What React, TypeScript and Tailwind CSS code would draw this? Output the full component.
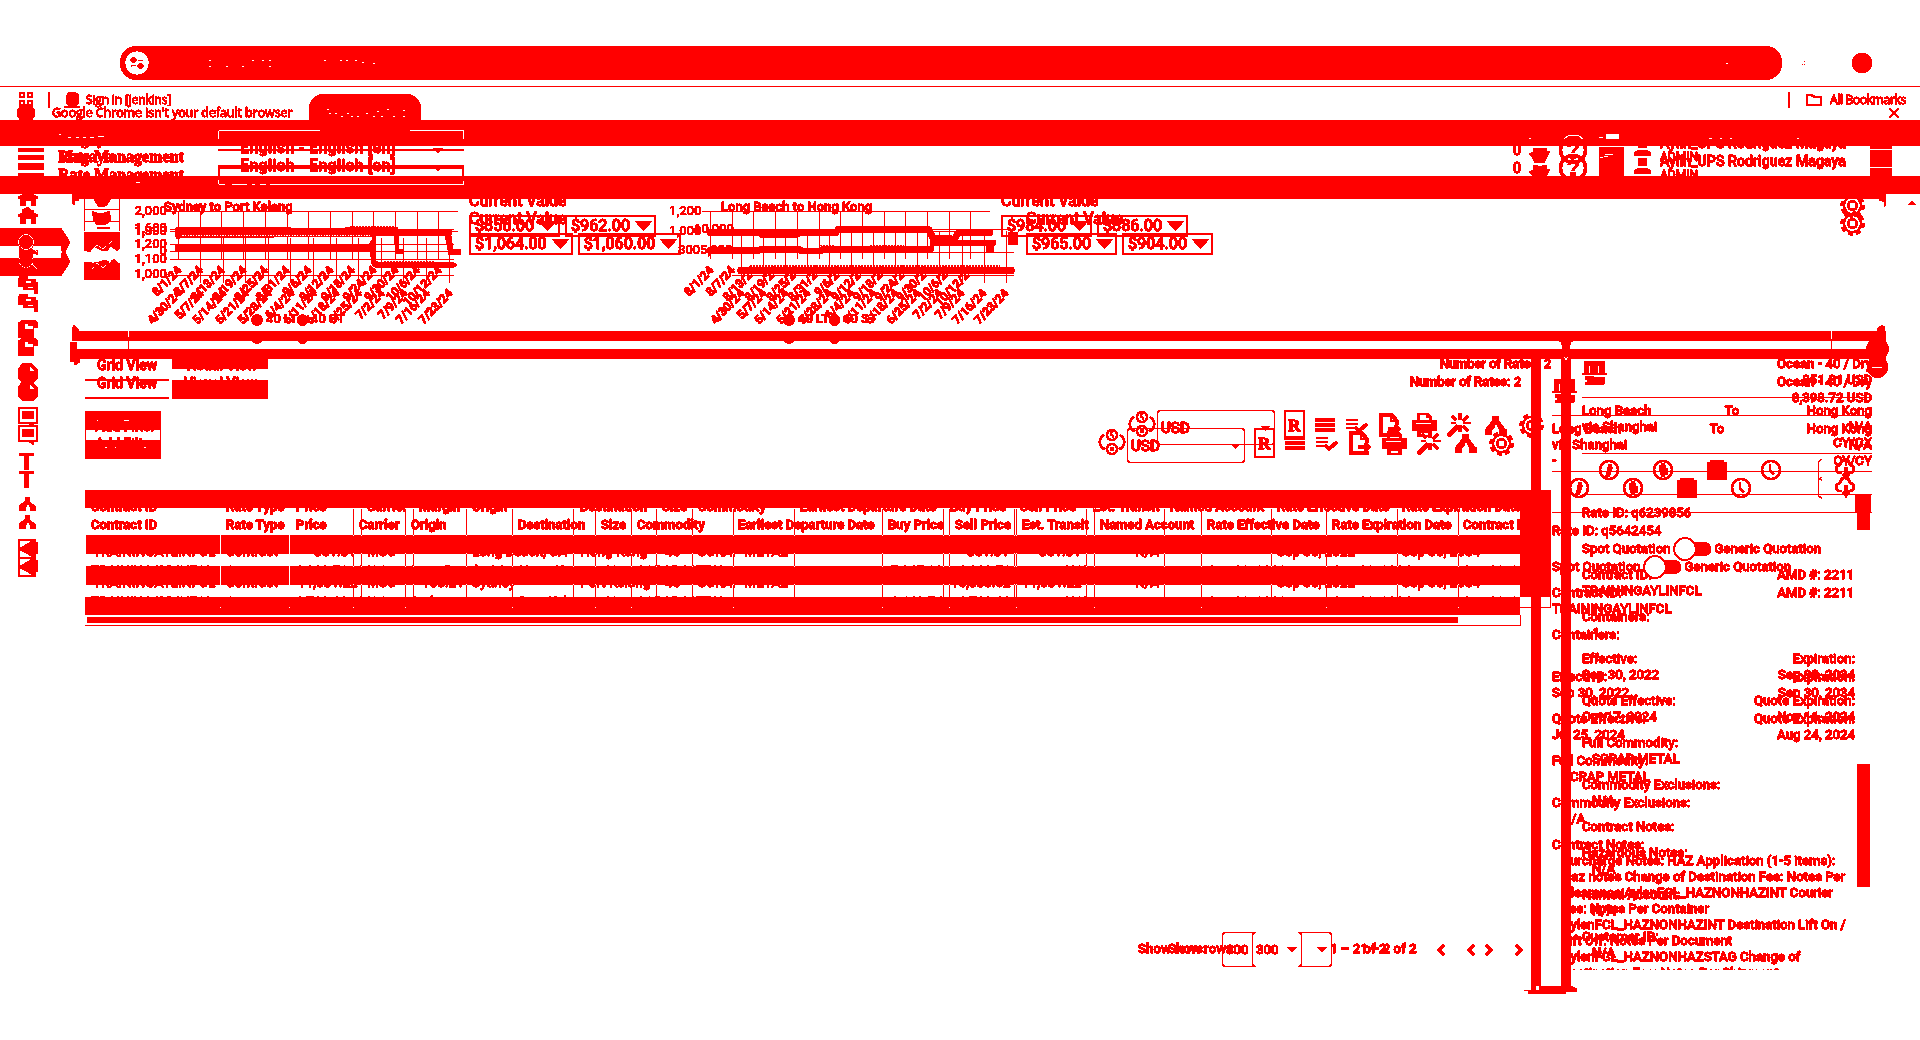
import React from 'react';

const RED = '#ff0000';

/* Every layer shares the single grid cell of the page. */
function Layer({ className = '', children }: { className?: string; children?: React.ReactNode }) {
  return <div className={`col-start-1 row-start-1 min-w-0 ${className}`}>{children}</div>;
}

/* Turns soft edges into hard ones, so that every pixel is either red or white. */
function HardEdges() {
  return (
    <svg className="absolute h-0 w-0">
      <filter id="hard" x="0" y="0" width="1" height="1" colorInterpolationFilters="sRGB">
        <feComponentTransfer>
          <feFuncG type="discrete" tableValues="0 0 0 0 0 0 0 0 0 0 1" />
          <feFuncB type="discrete" tableValues="0 0 0 0 0 0 0 0 0 0 1" />
        </feComponentTransfer>
      </filter>
    </svg>
  );
}

/* ---------- browser chrome ---------- */

function BrowserBar() {
  return (
    <Layer>
      <div className="flex h-[86px] items-start pl-[120px] pt-[46px]">
        <div className="flex h-[34px] w-[1662px] items-center rounded-full bg-[#f00] pl-[5px]">
          <div className="flex h-6 w-6 items-center justify-center rounded-full bg-white">
            <svg width="14" height="14" viewBox="0 0 14 14" fill={RED}>
              <circle cx="3.5" cy="4" r="2.700" />
              <rect x="8" y="4" width="5" height="1" />
              <circle cx="10.500" cy="10" r="2.700" />
              <rect x="1" y="9" width="5" height="1" />
              <rect x="1" y="9" width="1" height="2" />
            </svg>
          </div>
          <svg className="ml-[60px]" width="170" height="12" viewBox="209 58 170 12" fill="#fff" shapeRendering="crispEdges">
            {[[209, 61], [209, 67], [226, 67], [242, 67], [252, 61], [262, 61], [269, 61], [269, 67], [324, 61], [340, 61], [346, 61], [355, 61], [362, 63], [373, 64]].map(([x, y]) => (
              <rect key={`${x}-${y}`} x={x} y={y} width="2" height="1" />
            ))}
          </svg>
          <div className="ml-auto mr-[54px] h-px w-0.5 bg-white" />
        </div>
        <svg className="ml-[20px] mt-[14px]" width="4" height="6" fill={RED} shapeRendering="crispEdges">
          <rect x="2" y="1" width="1" height="1" />
          <rect x="0" y="4" width="1" height="1" />
          <rect x="2" y="4" width="1" height="1" />
        </svg>
        <div className="ml-[46px] mt-[7px] h-5 w-5 rounded-full bg-[#f00]" />
      </div>
      <div className="h-px bg-[#f00]" />
    </Layer>
  );
}

function BookmarksBar() {
  return (
    <Layer className="flex h-[108px] items-end pl-[19px] font-['Open_Sans'] text-[12px] font-medium leading-4">
      <svg className="mb-px" width="14" height="15" fill="none" stroke={RED} strokeWidth="2">
        <rect x="1" y="1" width="4" height="4" />
        <rect x="9" y="1" width="4" height="4" />
        <rect x="1" y="9" width="4" height="4" />
        <rect x="9" y="9" width="4" height="4" />
      </svg>
      <div className="ml-[15px] h-4 w-0.5 bg-[#f00]" />
      <svg className="ml-[14px]" width="16" height="16" fill={RED}>
        <path d="M4 1l2-1h5l3 2 1 3v6l-2 2v1h3v2H0v-2h4v-1l-2-2V5z" />
      </svg>
      <span className="ml-[6px] whitespace-nowrap tracking-[-0.15px]">Sign in [Jenkins]</span>
      <div className="ml-auto h-4 w-0.5 bg-[#f00]" />
      <svg className="ml-4 mb-[2px]" width="16" height="12" fill="none" stroke={RED} strokeWidth="2">
        <path d="M1 1h5l2 2h7v8H1z" />
      </svg>
      <span className="ml-2 mr-[14px] whitespace-nowrap tracking-[-0.3px]">All Bookmarks</span>
    </Layer>
  );
}

function InfoBar() {
  return (
    <Layer className="flex items-start pl-[17px] pt-[94px]">
      <div className="mt-[10px] h-[18px] w-[18px] rounded-full bg-[#f00]" />
      <span className="ml-[17px] mt-[11px] w-[257px] whitespace-nowrap font-['Open_Sans'] text-[12.5px] font-medium leading-4 tracking-[-0.08px]">
        Google Chrome isn't your default browser
      </span>
      <div className="h-[28px] w-[112px] rounded-t-[15px] bg-[#f00]">
        <svg width="112" height="28" fill="#fff" shapeRendering="crispEdges">
          {[[18, 15], [20, 19], [26, 19], [32, 22], [38, 19], [42, 22], [48, 22], [57, 19], [64, 22], [68, 17], [72, 22], [78, 15], [84, 22], [94, 16], [94, 22]].map(([x, y]) => (
            <rect key={`${x}-${y}`} x={x} y={y} width="2" height="1" />
          ))}
        </svg>
      </div>
      <svg className="ml-auto mr-[21px] mt-[14px]" width="10" height="10" stroke={RED} strokeWidth="1.8">
        <path d="M0.5 0.5l9 9M9.5 0.5l-9 9" />
      </svg>
    </Layer>
  );
}

/* ---------- solid strips left by the moved panels ---------- */

function Strips() {
  return (
    <Layer>
      <div className="pt-[120px]" />
      <div className="h-[26px] bg-[#f00]" />
      <div className="mt-[30px] h-[18px] bg-[#f00]" />
      <div className="ml-[72px] h-[5px] w-[1814px] bg-[#f00]" />
      <div className="flex justify-between pl-[72px] pr-[34px]">
        <svg width="7" height="7" fill={RED}><path d="M0 0h7v1l-4 1v3l-2 1z" /></svg>
        <svg width="7" height="8" fill={RED}><path d="M0 0h7v6l-2 2V3L0 1z" /></svg>
      </div>
      <div className="ml-[72px] mt-[124px] h-[10px] w-[1814px] bg-[#f00]" />
      <div className="ml-[70px] mt-[8px] h-[10px] w-[1816px] bg-[#f00]" />
      <div className="ml-[1531px] flex h-[627px] gap-[20px]">
        <div className="w-[10px] bg-[#f00]" />
        <div className="w-[10px] bg-[#f00]" />
      </div>
      <svg className="ml-[1524px]" width="54" height="9" fill={RED}>
        <path d="M7 0h5v4h3V0h32l6 3v3H42l-1 2H4V5H0V4h7z" />
      </svg>
    </Layer>
  );
}

function StripEnds() {
  return (
    <Layer className="flex items-start pl-[70px] pt-[325px]">
      <svg width="12" height="42" fill={RED}>
        <path d="M4 0l5 5v7H2V3zM1 17h6v8h3v12l-5 3-1-3H0V20z" />
      </svg>
      <svg className="ml-[1477px] mt-[15px]" width="14" height="20" fill={RED}>
        <path d="M0 0h14v2h-2l-1 3v13H3V5L2 2H0z" />
        <path d="M5 17l4 4M9 17l-4 4" stroke="#fff" />
      </svg>
      <svg className="ml-auto mr-[29px]" width="25" height="54" fill={RED}>
        <path d="M16 0l3 2v10h-8V4z" />
        <circle cx="11.500" cy="24" r="11" />
        <circle cx="11.500" cy="42" r="10.500" />
        <rect x="6" y="42" width="10" height="1.500" fill="#fff" />
      </svg>
    </Layer>
  );
}

/* ---------- application header ---------- */

function Header({ pad, name }: { pad: string; name: string }) {
  return (
    <Layer className={`flex items-start pl-[18px] ${pad}`}>
      <svg className="mt-[15px]" width="26" height="22" fill={RED}>
        <rect y="0" width="26" height="4" />
        <rect y="7" width="26" height="5" />
        <rect y="15" width="26" height="4" />
      </svg>
      <div className="-mt-[3px] ml-[14px] w-[160px] whitespace-nowrap font-['Liberation_Serif'] text-[16px] font-bold leading-[18px]">
        <div>Magaya</div>
        <div>{name}</div>
      </div>
      <div className="flex h-[18px] w-[246px] items-end border-b-2 border-[#f00] pl-[22px]">
        <span className="w-[193px] translate-y-[7px] whitespace-nowrap text-[16px] font-medium leading-4 tracking-[0.33px]">English - English [en]</span>
        <svg className="translate-y-[4px]" width="10" height="5" fill={RED}><path d="M0 0h10L5 5z" /></svg>
      </div>
      <div className="mt-[9px] ml-[1049px] w-4 text-[14px] font-medium leading-4">0</div>
      <svg className="mt-[14px]" width="21" height="22" fill={RED}>
        <path d="M4 1h14v3h3l-4 8-2 4H6l-3-6-3-3 4-2z" />
        <rect x="4" y="18" width="5" height="4" />
        <rect x="13" y="18" width="5" height="4" />
      </svg>
      <svg className="ml-[8px] mt-[2px]" width="30" height="30" fill="none" stroke={RED} strokeWidth="3">
        <circle cx="15" cy="15" r="12.500" />
        <path d="M11 12c0-6 9-5 8 0-.5 2.500-4 2-4 6" strokeWidth="2.500" />
        <rect x="14" y="20.500" width="2" height="1.500" />
      </svg>
      <div className="ml-[11px] mt-[14px] h-[30px] w-[25px] bg-[#f00]" />
      <svg className="ml-[9px] mt-[6px]" width="19" height="18" fill={RED}>
        <rect x="5" y="1" width="9" height="8" rx="3" />
        <path d="M1 17v-3l4-3h9l4 3v3z" />
      </svg>
      <div className="ml-[8px] mt-[2px] whitespace-nowrap">
        <div className="text-[14px] font-medium leading-4 tracking-[0.1px]">Aylin_UPS Rodriguez Magaya</div>
        <div className="text-[12px] leading-3">ADMIN</div>
      </div>
    </Layer>
  );
}

/* The top border of the lower language box. */
function LanguageBox() {
  return (
    <Layer className="pl-[218px] pt-[165px]">
      <div className="h-[13px] w-[246px] border-x-2 border-t-2 border-[#f00]" />
    </Layer>
  );
}

function MenuBlock() {
  return (
    <Layer className="flex justify-end pr-[28px] pt-[146px]">
      <div className="flex h-[30px] w-[22px] flex-col gap-[17px] bg-[#f00] pt-[3px]">
        <div className="h-px bg-white" />
        <div className="h-px bg-white" />
      </div>
    </Layer>
  );
}

function HeaderTraces() {
  return (
    <Layer className="pl-[58px] pt-[130px]">
      <svg width="1800" height="56" viewBox="58 130 1800 56" stroke="#fff" fill="none" shapeRendering="crispEdges">
        <path d="M59 134.500h2M68 137.500h3M76 137.500h3M83 137.500h3M90 137.500h4M98 136.500h6" />
        <path d="M218.500 139v-7l1-1.500H320M410 130.500h53l.5 1v7" />
        <path d="M218.500 180v3l1 1.500H225M232 184.500h15M252 184.500h3M260 184.500h6M270 184.500h193v-4M136 182.500h4" />
        <path d="M1529 138.500h2M1599 137.500h4M1709 138.500h3M1720 138.500h2M1730 138.500h2M1797 138.500h2M1564 139l4-3 5-1 6 1 4 3" />
        <path d="M1606 134h12v4h-12zM1600 157.500h3M1605 154.500h8M1604 156.500h4" fill="#fff" />
      </svg>
    </Layer>
  );
}

/* ---------- left navigation ---------- */

function Sidebar({ pad }: { pad: string }) {
  const icons = [
    <path d="M10 2l3 3h3v3l4 2v2h-2v7h-5v-5H8v5H2v-7H0v-2l4-2V5z" />,
    <g />,
    <path d="M2 1h8v3h8v3h2v12h-4v-4H5v-3H0V4zM8 6h5v2H8zM10 12h5v1h-5z" fillRule="evenodd" />,
    <path d="M5 1h12l3 3v5h-4v10H0V4zM7 5v5h8V7h-5V5z" fillRule="evenodd" />,
    <path d="M5 0h8l7 7v8l-5 5H5l-5-5V6zM12 3v5h5z" fillRule="evenodd" />,
    <path d="M0 0h20v17h-4v3l-5-3H0zM2 2v13h16V2zM4 4h12v8H4z" fillRule="evenodd" />,
    <path d="M1 2h15v3h-5v14H6V5H1z" />,
    <path d="M7 2h5v5l6 5v4h-6v-4l-2-3-2 3-1 4H1v-5l6-5z" />,
    <path d="M0 0h18v3h2v12h-2v5H0zM2 2v7L14 2zM2 11v7h13z" fillRule="evenodd" />,
  ];
  return (
    <Layer className={`flex flex-col pl-[18px] ${pad}`}>
      {icons.map((icon, i) => (
        <div key={i} className="flex h-11 items-center">
          <svg width="20" height="22" viewBox="0 0 20 22" fill={RED}>{icon}</svg>
        </div>
      ))}
    </Layer>
  );
}

function ActiveTab() {
  return (
    <Layer className="pt-[228px]">
      <svg width="72" height="48" viewBox="0 228 72 48" fill={RED}>
        <path d="M0 228h61l9 14-5 10 5 10-9 14H0v-18h61l1-6-1-6H0z" />
        <path d="M19 244h14v6h5v5l-5-2v7H19z" />
        <g fill="none" stroke="#fff" strokeWidth="1.400">
          <circle cx="26" cy="242" r="7.500" />
          <path d="M31 247l6 5M32 264l5 5" />
          <path d="M20 257a7 7 0 1 0 12 0" />
        </g>
      </svg>
    </Layer>
  );
}

/* ---------- charts ---------- */

const datesA = ['8/1/24', '8/7/24', '8/13/24', '8/19/24', '8/25/24', '8/31/24', '9/6/24', '9/12/24', '9/18/24', '9/24/24', '9/30/24', '10/6/24', '10/12/24'];
const datesB = ['4/30/24', '5/7/24', '5/14/24', '5/21/24', '5/28/24', '6/4/24', '6/11/24', '6/18/24', '6/25/24', '7/2/24', '7/9/24', '7/16/24', '7/23/24'];

function DateLabels({ dates, x, step, y }: { dates: string[]; x: number; step: number; y: number }) {
  return (
    <g fontSize="11.800" fontWeight="600" textAnchor="end" stroke={RED} strokeWidth="0.500">
      {dates.map((d, i) => (
        <text key={d} transform={`translate(${x + i * step} ${y}) rotate(-46)`}>{d}</text>
      ))}
    </g>
  );
}

function SydneyChart() {
  return (
    <svg width="339" height="150" viewBox="130 196 339 150" fill={RED} className="shrink-0">
      <g stroke={RED} shapeRendering="crispEdges">
        <path d="M166 211.500h292M170 229.500h284M170 231.500h288M170 244.500h284M170 251.500h284M170 259.500h284M170 275.500h284" />
        {datesA.map((d, i) => <path key={d} d={`M${178.500 + i * 21.700} 211v48`} />)}
        {datesB.slice(1).map((d, i) => <path key={d} d={`M${200.500 + i * 22.600} 238v45`} />)}
      </g>
      <path d="M175 229l2-2h114v1h54l3-1h50v2h52l2 2-1 4 2 14h8v6h-12l-4-19h-46v13h5v5h-8l-2-18h-19l-3 1h-98v1H178l-3-2z" />
      <path d="M175 245l2-1h192l3-4v-4h4v25l2 1h75l4 3-4 3h-77l-4-3-2-14H176l-1-3z" />
      <path d="M182 235.500h190" stroke="#fff" strokeDasharray="2 1 1 2 1 1" shapeRendering="crispEdges" />
      <path d="M176 235h4v3h-4zM180 236.500h192M215 250.500h150" stroke={RED} strokeDasharray="2 1" />
      <path d="M384 261.500h50M350 227h45" stroke={RED} strokeDasharray="2 1" />
      <g fontSize="13" textAnchor="end" fontWeight="500">
        <text x="167" y="215">2,000</text>
        <text x="167" y="232">1,600</text>
        <text x="167" y="235">1,300</text>
        <text x="167" y="248">1,200</text>
        <text x="167" y="255">0</text>
        <text x="167" y="263">1,100</text>
        <text x="167" y="278">1,000</text>
      </g>
      <text x="164" y="211" fontSize="13" fontWeight="600" stroke={RED} strokeWidth="0.300">Sydney to Port Kelang</text>
      <DateLabels dates={datesA} x={182} step={21.7} y={271} />
      <DateLabels dates={datesB} x={182} step={22.6} y={294} />
      <Legend x={257} />
    </svg>
  );
}

function Legend({ x }: { x: number }) {
  return (
    <g fontSize="13" fontWeight="600">
      <circle cx={x} cy="320" r="5.500" />
      <circle cx={x + 45.500} cy="320" r="5.500" />
      <circle cx={x} cy="338" r="5.500" />
      <circle cx={x + 45.500} cy="338" r="5.500" />
      <text x={x + 9} y="323">40 LT</text>
      <text x={x + 54} y="323">40 ST</text>
    </g>
  );
}

function HongKongChart() {
  return (
    <svg width="361" height="150" viewBox="660 196 361 150" fill={RED} className="shrink-0">
      <g stroke={RED} shapeRendering="crispEdges">
        <path d="M702 211.500h288M702 231.500h288M732 229.500h282M702 252.500h312M732 275.500h282" />
        {datesA.map((d, i) => <path key={d} d={`M${710.500 + i * 21.700} 211v48`} />)}
        {datesB.map((d, i) => <path key={d} d={`M${741.500 + i * 22.050} 231v52`} />)}
      </g>
      <g stroke={RED} fill="none" strokeWidth="6" strokeLinejoin="round" strokeLinecap="round">
        <path d="M710 232.500h50l2 1h37l3-1h34l2-3h91l4 9M762 234.500h34" />
        <path d="M710 250.500h48l4-1.500h36l4 2h18l4-2h60l30 0h17" />
        <path d="M934 240h20l4-7h32M955 243h38" />
        <path d="M741 270.500h270" strokeWidth="7" />
      </g>
      <path d="M986 243h8v10h-8zM1008 232h10v13h-10z" />
      <path d="M930 235h22v11h-22z" />
      <path d="M760 246.500h40M820 245.500h15M750 266h250M870 246h34" stroke={RED} strokeDasharray="2 1" />
      <g fontSize="13" fontWeight="500">
        <text x="669" y="215">1,200</text>
        <text x="669" y="235">1,000</text>
        <text x="694" y="233">10,000</text>
        <text x="678" y="254">800</text>
        <text x="700" y="254">5,000</text>
      </g>
      <text x="721" y="211" fontSize="13" fontWeight="600" stroke={RED} strokeWidth="0.300">Long Beach to Hong Kong</text>
      <DateLabels dates={datesA} x={714} step={21.7} y={271} />
      <DateLabels dates={datesB} x={745} step={22} y={294} />
      <Legend x={789} />
    </svg>
  );
}

function Values({ className, values }: { className: string; values: string[] }) {
  return (
    <div className={`col-start-1 row-start-1 whitespace-nowrap ${className}`}>
      <div className="text-[16px] font-medium leading-5">Current Value</div>
      <div className="flex gap-[5px] pt-[4px]">
        {values.map((v) => (
          <div key={v} className="flex h-[22px] items-center border-2 border-[#f00] pl-[4px] pr-[2px] text-[16px] font-medium leading-4">
            {v}
            <svg className="ml-[5px]" width="17" height="11" fill={RED}><path d="M0 0h17L8.500 10z" /></svg>
          </div>
        ))}
      </div>
    </div>
  );
}

function Charts() {
  return (
    <Layer className="flex items-start pl-[130px] pt-[196px]">
      <SydneyChart />
      <div className="grid w-[191px] shrink-0 justify-items-start">
        <Values className="-mt-[5px]" values={['$856.00', '$962.00']} />
        <Values className="mt-[13px]" values={['$1,064.00', '$1,060.00']} />
      </div>
      <HongKongChart />
      <div className="-ml-[20px] grid justify-items-start">
        <Values className="-mt-[5px]" values={['$984.00', '$886.00']} />
        <Values className="ml-[25px] mt-[13px]" values={['$965.00', '$904.00']} />
      </div>
    </Layer>
  );
}

function CardThumbs() {
  return (
    <Layer className="pl-[84px] pt-[199px]">
      <svg width="36" height="82" viewBox="84 199 36 82" fill={RED}>
        <path d="M84.500 199v32M119.500 199v32M84 209.500h36M84 221.500h36" stroke={RED} />
        <path d="M94 199h17l-4 6-3 2h-5l-3-4zM92 211l5 2h7l6-2v4l1 2v4l-6 4h-8l-4-5v-3zM97 227h13v2H97zM84 232h36v16l-3 3-6-5-4 5h-4l-8-4-5 5-6-2z" />
        <path d="M84 262l9 1 6-1 5-2 6 2 4-3 4 4h2v17H84z" />
        <g fill="none" stroke="#fff" strokeWidth="1.200">
          <path d="M91 251l6-6 6 4 9-8M92 269l5-6 6 5 8-7" />
        </g>
      </svg>
    </Layer>
  );
}

function Gear({ size, className = '' }: { size: number; className?: string }) {
  return (
    <svg className={`shrink-0 ${className}`} width={size} height={size} viewBox="-13 -13 26 26" fill="none" stroke={RED}>
      <circle r="9" strokeWidth="2" />
      <circle r="4.500" strokeWidth="2" />
      <circle r="11" strokeWidth="3" strokeDasharray="4.320 4.320" />
    </svg>
  );
}

function CardGears() {
  return (
    <Layer className="grid justify-end pr-[55px] pt-[193px]">
      <Gear size={25} className="col-start-1 row-start-1" />
      <Gear size={25} className="col-start-1 row-start-1 mt-[18px]" />
    </Layer>
  );
}

function CornerMark() {
  return (
    <Layer className="flex justify-end pr-[4px] pt-[201px]">
      <svg width="8" height="4" fill={RED}><path d="M4 0l4 4H0z" /></svg>
    </Layer>
  );
}

/* ---------- result views ---------- */

function ViewTabs({ pad }: { pad: string }) {
  return (
    <Layer className={`flex items-start pl-[85px] ${pad}`}>
      <div className="flex h-[24px] w-[84px] justify-center border-b-2 border-[#f00] text-[14px] font-semibold leading-4">Grid View</div>
      <div className="w-[102px] pl-[15px] text-[14px] font-semibold leading-4">Visual View</div>
    </Layer>
  );
}

function FilterButton({ pad }: { pad: string }) {
  return <Layer className={`pl-[95px] text-[14px] font-medium leading-4 ${pad}`}>Add Filter</Layer>;
}

function ViewBlocks() {
  return (
    <Layer className="pl-[85px] pt-[359px]">
      <div className="ml-[87px] flex h-[40px] w-[96px] flex-col justify-between">
        <div className="h-[10px] bg-[#f00]" />
        <div className="h-[19px] bg-[#f00]" />
      </div>
      <div className="mt-[12px] flex h-[48px] w-[76px] flex-col justify-between overflow-hidden rounded-[2px]">
        <div className="flex h-[19px] items-center gap-[26px] bg-[#f00] pl-[12px]">
          <div className="h-px w-px bg-white" />
          <div className="h-px w-[5px] bg-white" />
        </div>
        <div className="h-[10px] border-x border-[#f00]" />
        <div className="flex h-[19px] items-start gap-[8px] bg-[#f00] pl-[20px] pt-[7px]">
          <div className="h-px w-[2px] bg-white" />
          <div className="h-px w-px bg-white" />
          <div className="ml-[20px] h-px w-[2px] bg-white" />
        </div>
      </div>
    </Layer>
  );
}

function Toolbar({ pad }: { pad: string }) {
  return (
    <Layer className={pad}>
      <div className="ml-[300px] w-[123px] whitespace-nowrap text-right text-[13px] font-bold leading-4 tracking-[-0.1px]">Number of Rates: 2</div>
      <div className="mt-[38px] flex items-start">
        <svg width="28" height="30" viewBox="-14 -14 28 30" fill="none" stroke={RED} strokeWidth="2">
          <circle cy="-7" r="5" />
          <circle cy="7" r="5" />
          <path d="M-8-7q-5 3-4 9 1 4 5 5M8-7q5 3 4 9-1 4-5 5" />
          <path d="M1-10q-3 0-2 3 3 0 2 3M-2 6h4M-2 8h4" strokeWidth="1.300" />
        </svg>
        <div className="ml-px flex h-[35px] w-[118px] items-center rounded-[3px] border border-[#f00] pl-[3px] pt-[2px] text-[15px] font-medium">
          USD
          <svg className="ml-auto mr-[4px]" width="9" height="5" fill={RED}><path d="M0 0h9L4.500 5z" /></svg>
        </div>
        <div className="ml-[9px] flex h-[30px] w-[21px] items-center justify-center border-2 border-[#f00] font-['Liberation_Serif'] text-[17px] font-bold leading-none">R</div>
        <svg className="ml-[10px] mt-[7px]" width="20" height="16" fill={RED}>
          <rect y="1" width="20" height="4" />
          <rect y="6" width="20" height="4" />
          <rect y="11" width="20" height="4" />
        </svg>
        <svg className="ml-[11px] mt-[8px]" width="22" height="17" fill={RED}>
          <path d="M0 1h12v2H0zM0 5h12v2H0zM0 9h9v2H0z" />
          <path d="M9 9l4 4 8-7" fill="none" stroke={RED} strokeWidth="3" />
        </svg>
        <svg className="ml-[11px] mt-[3px]" width="22" height="24" fill="none" stroke={RED} strokeWidth="3">
          <path d="M18 12V8l-5-6H2v20h16v-2" />
          <path d="M12 2v6h6" strokeWidth="2" />
          <path d="M9 16h11M16 12l4 4-4 4" />
        </svg>
        <svg className="ml-[11px] mt-[3px]" width="25" height="24" viewBox="0 0 24 24" fill={RED}>
          <path d="M5 0h10l4 4v3h5v11h-5v6H5v-6H0V7h5zM7 2v5h10V5h-3V2zM8 20v2h8v-2z" fillRule="evenodd" />
          <path d="M3 10h16v1H3z" fill="#fff" />
        </svg>
        <svg className="ml-[10px] mt-[3px]" width="24" height="24" stroke={RED} strokeWidth="2.200">
          <path d="M1 23l10-10" strokeWidth="4.500" />
          <path d="M13 0v7M13 12v7M5 3l4 4M21 3l-5 5M16 10h8M4 10h5M16 13l5 5" />
        </svg>
        <svg className="ml-[14px] mt-[6px]" width="22" height="20" fill={RED}>
          <path d="M7 0h7v5l6 8h2v6h-8v-6l-2-4-1-2-2 5-2 2v5H0v-5l7-9z" />
        </svg>
        <Gear size={25} className="ml-[12px] mt-[3px]" />
      </div>
    </Layer>
  );
}

/* ---------- rate table ---------- */

type Cell = [x: number, text: string];

const headA: Cell[] = [[91, 'Contract ID'], [226, 'Rate Type'], [296, 'Price'], [367, 'Carrier'], [419, 'Margin'], [472, 'Origin'], [580, 'Destination'], [662, 'Size'], [698, 'Commodity'], [800, 'Earliest Departure Date'], [950, 'Buy Price'], [1020, 'Sell Price'], [1093, 'Est. Transit'], [1170, 'Named Account'], [1277, 'Rate Effective Date'], [1402, 'Rate Expiration Date']];
const headB: Cell[] = [[91, 'Contract ID'], [226, 'Rate Type'], [296, 'Price'], [359, 'Carrier'], [411, 'Origin'], [518, 'Destination'], [601, 'Size'], [637, 'Commodity'], [738, 'Earliest Departure Date'], [888, 'Buy Price'], [955, 'Sell Price'], [1022, 'Est. Transit'], [1100, 'Named Account'], [1207, 'Rate Effective Date'], [1332, 'Rate Expiration Date'], [1463, 'Contract Date']];
const rowsA: Cell[][] = [
  [[93, 'TRAININGAYLINFCL'], [226, 'Contract'], [314, '851.81'], [367, 'MSC'], [472, 'Long Beach, CA'], [580, 'Hong Kong'], [665, '40'], [698, 'SCRAP METAL'], [967, '851.81'], [1039, '851.81'], [1135, 'N/A'], [1277, 'Sep 30, 2022'], [1402, 'Sep 30, 2034']],
  [[93, 'TRAININGAYLINFCL'], [226, 'Contract'], [298, '11,081.22'], [367, 'MSC'], [422, '168.21'], [472, 'Sydney'], [580, 'Port Kelang'], [665, '40'], [698, 'SCRAP METAL'], [951, '10,883.02'], [1022, '11,081.22'], [1135, 'N/A'], [1277, 'Sep 30, 2022'], [1402, 'Sep 30, 2034']],
];
const rowsB: Cell[][] = [
  [[91, 'TRAININGAYLINFCL'], [226, 'Contract'], [296, '8,398.72'], [359, 'MSC'], [411, 'Long Beach, CA'], [519, 'Hong Kong'], [603, '40'], [637, 'SCRAP METAL'], [891, '7,847.00'], [959, '8,398.72'], [1065, 'N/A'], [1208, 'Sep 30, 2022'], [1333, 'Sep 30, 2034'], [1463, 'Sep 30, 2022']],
  [[91, 'TRAININGAYLINFCL'], [226, 'Contract'], [296, '2,738.80'], [359, 'MSC'], [411, 'Sydney'], [519, 'Port Kelang'], [603, '40'], [637, 'SCRAP METAL'], [891, '2,640.74'], [959, '2,738.80'], [1065, 'N/A'], [1208, 'Sep 30, 2022'], [1333, 'Sep 30, 2034'], [1463, 'Sep 30, 2022']],
];
const rules = [353, 361, 405, 413, 466, 512, 573, 595, 631, 656, 692, 733, 794, 882, 943, 949, 1014, 1016, 1086, 1094, 1164, 1201, 1271, 1326, 1397, 1458];
const notches = [220, 289, 353, 405, 512, 595, 631, 733, 882, 949, 1016, 1094, 1201, 1326, 1458];

/* A row of cells, each as wide as the distance to the next column. */
function Row({ cells, className }: { cells: Cell[]; className: string }) {
  return (
    <div className={`flex w-[1520px] overflow-hidden whitespace-nowrap leading-4 ${className}`}>
      {cells.map(([x, text], i) => {
        const start = i === 0 ? 0 : x;
        const end = i + 1 < cells.length ? cells[i + 1][0] : 1520;
        return (
          <div key={i} className="shrink-0" style={{ width: end - start, paddingLeft: i === 0 ? x : 0 }}>{text}</div>
        );
      })}
    </div>
  );
}

function TableText({ pad, rowHead, head, rows }: { pad: string; rowHead: string; head: Cell[]; rows: Cell[][] }) {
  return (
    <Layer className={pad}>
      <Row cells={head} className={`text-[13px] font-bold tracking-[0.05px] ${rowHead}`} />
      {rows.map((r, i) => <Row key={i} cells={r} className="h-[31px] text-[13.6px]" />)}
    </Layer>
  );
}

function TableBlocks() {
  return (
    <Layer className="pl-[85px] pt-[490px]">
      <div className="h-[18px] w-[1466px] bg-[#f00]" />
      <div className="flex">
        <div className="w-[1435px]">
          <div className="mt-[27px] h-[19px] bg-[#f00]" />
          <div className="mt-[12px] h-[19px] bg-[#f00]" />
        </div>
        <div className="h-[89px] w-[31px] bg-[#f00]" />
      </div>
      <div className="flex">
        <div className="h-[18px] w-[1435px] bg-[#f00]" />
        <div className="h-[11px] w-[31px] border-b border-r border-[#f00]" />
      </div>
      <div className="h-[11px] w-[1436px] border-b border-r border-[#f00] pl-[2px] pt-[2px]">
        <div className="h-[6px] w-[1371px] bg-[#f00]" />
      </div>
    </Layer>
  );
}

function TableRules() {
  return (
    <Layer className="pl-[85px] pt-[508px]">
      <svg width="1435" height="100" viewBox="85 508 1435 100" shapeRendering="crispEdges">
        {rules.map((x) => <path key={x} d={`M${x + 0.5} 508v27M${x + 0.5} 554v12M${x + 0.5} 585v12`} stroke={RED} />)}
        {rules.map((x) => <path key={x} d={`M${x + 0.5} 508v1M${x + 0.5} 535v1M${x + 0.5} 553v1M${x + 0.5} 566v1M${x + 0.5} 584v1`} stroke="#fff" />)}
        {notches.map((x) => <path key={x} d={`M${x + 0.5} 607v1`} stroke="#fff" />)}
        <path d="M85.500 535v19M85.500 566v19M220.500 535v19M220.500 566v19M289.500 535v19M289.500 566v19" stroke="#fff" />
      </svg>
    </Layer>
  );
}

function Pager({ pad }: { pad: string }) {
  return (
    <Layer className={`flex items-center pt-[932px] text-[13.3px] font-medium leading-4 ${pad}`}>
      <span className="-mt-[2px] w-[84px] whitespace-nowrap">Show rows:</span>
      <div className="flex h-[35px] w-[80px] items-center rounded-[3px] border border-[#f00] pl-[3px]">
        300
        <svg className="ml-auto mr-[4px]" width="10" height="5" fill={RED}><path d="M0 0h10L5 5z" /></svg>
      </div>
      <span className="-mt-[2px] ml-[28px] w-[107px] whitespace-nowrap">1 – 2 of 2</span>
      <svg width="56" height="12" fill="none" stroke={RED} strokeWidth="2.500">
        <path d="M7 1L2 6l5 5M49 1l5 5-5 5" />
      </svg>
    </Layer>
  );
}

/* The stretch in which both page-size boxes share their borders stays blank. */
function PagerGap() {
  return (
    <Layer className="pl-[1256px] pt-[932px]">
      <div className="h-px w-[42px] bg-white" />
      <div className="mt-[33px] h-px w-[42px] bg-white" />
    </Layer>
  );
}

/* ---------- rate details ---------- */

interface Detail {
  mode: string;
  price: string;
  transit: string;
  terms: string;
  id: string;
  containers: string;
  quoteFrom: string;
  quoteTo: string;
  notes: string[];
  more: [string, string][];
}

function Pair({ left, right, a, b }: { left: string; right: string; a: string; b: string }) {
  return (
    <div className="mb-[10px] flex justify-between pr-[17px]">
      <div>{left}<br />{a}</div>
      <div className="text-right">{right}<br />{b}</div>
    </div>
  );
}

function Details({ d, className, via }: { d: Detail; className: string; via?: boolean }) {
  return (
    <Layer className={`flex flex-col whitespace-nowrap text-[13.2px] font-medium leading-4 ${className}`}>
      <div className="flex h-[41px] justify-between">
        <svg className="mt-[4px]" width="26" height="26" viewBox="0 0 26 26" fill={RED}>
          <path d="M2 1h20l1 3v9h2v2H0v-2h2zM7 6v7h1V6zM16 6v7h1V6z" fillRule="evenodd" />
          <path d="M4 16h8v1h11v6l-2 2h-7l-1-1-1 1H4l-1-3h2v-2H3z" />
        </svg>
        <div className="text-right">{d.mode}<br />{d.price}</div>
      </div>
      <div className="grid h-[57px] grid-cols-3 border-y border-[#f00] pt-[5px]">
        <div>Long Beach<br />via Shanghai<br />{via ? '-' : ''}</div>
        <div className="pl-[10px] text-center">To</div>
        <div className="text-right">Hong Kong<br />{d.transit}<br />{d.terms}</div>
      </div>
      <div className="flex h-[41px] items-center gap-[34px] border-b border-[#f00] pb-[9px] pl-[17px]">
        <svg width="20" height="20" fill="none" stroke={RED} strokeWidth="2"><circle cx="10" cy="10" r="9" /><path d="M11 4v3M8 9h3l-2 6h2" strokeWidth="4" /></svg>
        <svg width="20" height="20" fill="none" stroke={RED} strokeWidth="2"><circle cx="10" cy="10" r="9" /><path d="M13 7H8v3h5v3H7M10 3v14" strokeWidth="3" /></svg>
        <svg width="20" height="20" fill={RED}><path d="M0 2h3V0h14v2h3v18H0z" /></svg>
        <svg width="20" height="20" fill="none" stroke={RED} strokeWidth="2"><circle cx="10" cy="10" r="9" /><path d="M9 4v7l4 3" /></svg>
        <div className="ml-auto mr-[15px] flex items-center">
          <svg width="5" height="22" fill="none" stroke={RED}><path d="M4.500 .5L1.500 3v16l3 2" /></svg>
          <svg className="ml-[13px]" width="22" height="22" fill="none" stroke={RED} strokeWidth="2.200"><path d="M7 14H4q-3-1-3-4t4-4q1-5 5-5t5 5q4 1 4 4t-4 4h-2M11 8v11M8 15l3 4 3-4" /></svg>
        </div>
      </div>
      <div className="mt-[10px]">Rate ID: {d.id}</div>
      <div className="mt-[20px] flex h-4 items-center">
        Spot Quotation
        <svg className="ml-[2px] mr-[4px] shrink-0" width="38" height="24"><rect x="13" y="5" width="25" height="14" rx="7" fill={RED} /><circle cx="12" cy="12" r="11" fill="#fff" stroke={RED} strokeWidth="1.200" /></svg>
        Generic Quotation
      </div>
      <div className="mb-[10px] mt-[10px] flex justify-between pr-[18px]"><div>Contract ID:<br />TRAININGAYLINFCL</div><div>AMD #: 2211</div></div>
      <div className="mb-[10px] h-8">Containers:<div className="pl-[10px]">{d.containers}</div></div>
      <Pair left="Effective:" right="Expiration:" a="Sep 30, 2022" b="Sep 30, 2034" />
      <Pair left="Quote Effective:" right="Quote Expiration:" a={d.quoteFrom} b={d.quoteTo} />
      <div className="mb-[10px]">Full Commodity:<div className="pl-[10px]">SCRAP METAL</div></div>
      <div className="mb-[10px]">Commodity Exclusions:<div className="pl-[10px]">N/A</div></div>
      <div className="mb-[9px]">Contract Notes:</div>
      <div className="-mt-[9px] max-h-[117px] overflow-hidden pl-[10px]">{d.notes.map((n) => <div key={n}>{n}</div>)}</div>
      {d.more.map(([k, v]) => <div key={k} className="mb-[-1px] mt-[10px] h-[33px]">{k}<div className="pl-[10px]">{v}</div></div>)}
    </Layer>
  );
}

const detailA: Detail = {
  mode: 'Ocean - 40 / Dry', price: '851.81 USD', transit: 'N/A', terms: 'CY/CX', id: 'q6239856', containers: '1',
  quoteFrom: 'Oct 17, 2024', quoteTo: 'Nov 16, 2024', notes: [],
  more: [['Hazardous Notes:', 'N/A'], ['Named Account:', 'N/A'], ['Customer ID:', 'N/A']],
};
const detailB: Detail = {
  mode: 'Ocean - 40 / Dry', price: '8,398.72 USD', transit: 'N/A', terms: 'CY/CY', id: 'q5642454', containers: '',
  quoteFrom: 'Jul 25, 2024', quoteTo: 'Aug 24, 2024',
  notes: ['Surcharge Notes: HAZ Application (1-5 items):', 'Haz notes Change of Destination Fee: Notes Per', 'Clearance AylenFCL_HAZNONHAZINT Courier', 'Fee: Notes Per Container', 'AylenFCL_HAZNONHAZINT Destination Lift On /', 'Lift Off: Notes Per Document', 'AylenFCL_HAZNONHAZSTAG Change of', 'Destination Fee: Notes Per Shipment'],
  more: [],
};

function ScrollThumbs() {
  return (
    <Layer className="flex flex-col items-end pr-[50px] pt-[494px]">
      <div className="mr-[-1px] h-[18px] w-[16px] bg-[#f00]" />
      <div className="h-[18px] w-[13px] bg-[#f00]" />
      <div className="mt-[234px] h-[123px] w-[13px] bg-[#f00]" />
    </Layer>
  );
}

function EdgeNotches() {
  return (
    <Layer className="flex pl-[128px] pt-[331px]">
      <div className="flex flex-col"><div className="h-[6px] w-px bg-white" /><div className="h-[12px] w-px bg-[#f00]" /></div>
      <div className="ml-[1702px] flex flex-col"><div className="h-[8px] w-px bg-white" /><div className="h-[10px] w-px bg-[#f00]" /></div>
    </Layer>
  );
}

export default function App() {
  return (
    <>
      <HardEdges />
      <main className="grid h-[1040px] w-[1920px] grid-cols-[1920px] grid-rows-[1040px] items-start overflow-hidden bg-white font-['Roboto',sans-serif] text-[#f00] [-webkit-text-stroke:0.4px_#f00] [filter:url(#hard)]">
        <BrowserBar />
        <BookmarksBar />
        <InfoBar />
        <Header pad="pt-[133px]" name="Rate Management" />
        <Header pad="pt-[151px]" name="Rate Management" />
        <LanguageBox />
        <Charts />
        <CardThumbs />
        <CardGears />
        <Strips />
        <StripEnds />
        <HeaderTraces />
        <MenuBlock />
        <CornerMark />
        <Sidebar pad="pt-[176px]" />
        <Sidebar pad="pt-[194px]" />
        <ActiveTab />
        <EdgeNotches />
        <ViewTabs pad="pt-[357px]" />
        <ViewTabs pad="pt-[375px]" />
        <FilterButton pad="pt-[418px]" />
        <FilterButton pad="pt-[436px]" />
        <ViewBlocks />
        <Toolbar pad="ml-[1128px] pt-[356px]" />
        <Toolbar pad="ml-[1098px] pt-[374px]" />
        <TableText pad="pt-[499px]" rowHead="h-[44px]" head={headA} rows={rowsA} />
        <TableText pad="pt-[517px]" rowHead="h-[45px]" head={headB} rows={rowsB} />
        <TableBlocks />
        <TableRules />
        <Pager pad="pl-[1138px]" />
        <Pager pad="pl-[1168px]" />
        <PagerGap />
        <Details d={detailA} className="ml-[1582px] w-[290px] pt-[356px]" />
        <Details d={detailB} className="ml-[1552px] w-[320px] pt-[374px]" via />
        <ScrollThumbs />
      </main>
    </>
  );
}
